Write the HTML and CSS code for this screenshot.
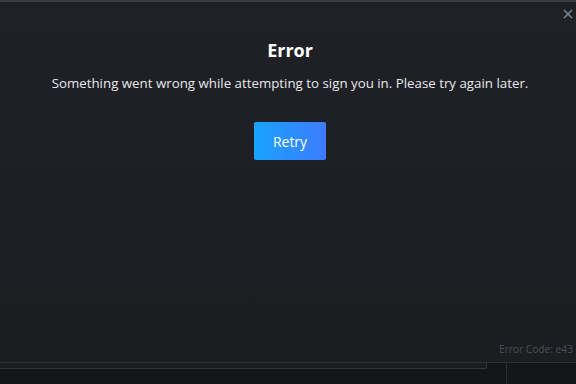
FILE: index.html
```html
<!DOCTYPE html>
<html lang="en">
<head>
    <meta charset="UTF-8">
    <title>Sign in error</title>
    <link rel="stylesheet" href="styles.css">
</head>
<body>
    <div class="backdrop-top"></div>
    <div class="dialog">
        <button class="close-btn" aria-label="Close">
            <svg width="10" height="10" viewBox="0 0 10 10">
                <path d="M1 1 L9 9 M9 1 L1 9" stroke="#7d8894" stroke-width="1.5" fill="none"/>
            </svg>
        </button>
        <div class="dialog-body">
            <h2>Error</h2>
            <p class="message">Something went wrong while attempting to sign you in. Please try again later.</p>
            <button class="retry-btn">Retry</button>
        </div>
        <div class="error-code">Error Code: e43</div>
    </div>
    <div class="backdrop-bottom">
        <div class="panel-left"></div>
        <div class="panel-right"></div>
    </div>
</body>
</html>
```

FILE: styles.css
```css
body {
    margin: 0;
    width: 576px;
    height: 384px;
    overflow: hidden;
    background-color: #141518;
    font-family: 'Open Sans', 'Noto Sans', sans-serif;
    display: flex;
    flex-direction: column;
}

.backdrop-top {
    height: 2px;
    background-color: #3a3c42;
}

.dialog {
    height: 360px;
    background: linear-gradient(180deg, #202127 0%, #1c1d21 100%);
    display: flex;
    flex-direction: column;
    position: relative;
}

.close-btn {
    position: absolute;
    top: 6px;
    right: 2px;
    width: 12px;
    height: 12px;
    padding: 0;
    border: none;
    background: none;
    display: flex;
    align-items: center;
    justify-content: center;
}

.dialog-body {
    flex: 1;
    display: flex;
    flex-direction: column;
    align-items: center;
    padding: 36px 0 0 4px;
}

.dialog-body h2 {
    margin: 0;
    font-size: 18px;
    font-weight: bold;
    color: #ffffff;
    line-height: 24px;
}

.message {
    margin: 11px 0 0;
    font-size: 13.3px;
    color: #e6e8ec;
    line-height: 20px;
}

.retry-btn {
    margin-top: 29px;
    width: 72px;
    height: 38px;
    border: none;
    border-radius: 2px;
    background: linear-gradient(90deg, #1aa3ff 0%, #3d7bff 100%);
    color: #ffffff;
    font-family: inherit;
    font-size: 14px;
}

.error-code {
    align-self: flex-end;
    margin: 0 3px 5px 0;
    font-size: 10.2px;
    color: #4b4e56;
    line-height: 16px;
}

.backdrop-bottom {
    flex: 1;
    display: flex;
    border-top: 1px solid #2e3035;
}

.panel-left {
    width: 486px;
    height: 5px;
    border-right: 1px solid #34363b;
    border-bottom: 1px solid #34363b;
    background-color: #1a1b1e;
}

.panel-right {
    margin-left: 19px;
    border-left: 1px solid #2c2e33;
}
```
